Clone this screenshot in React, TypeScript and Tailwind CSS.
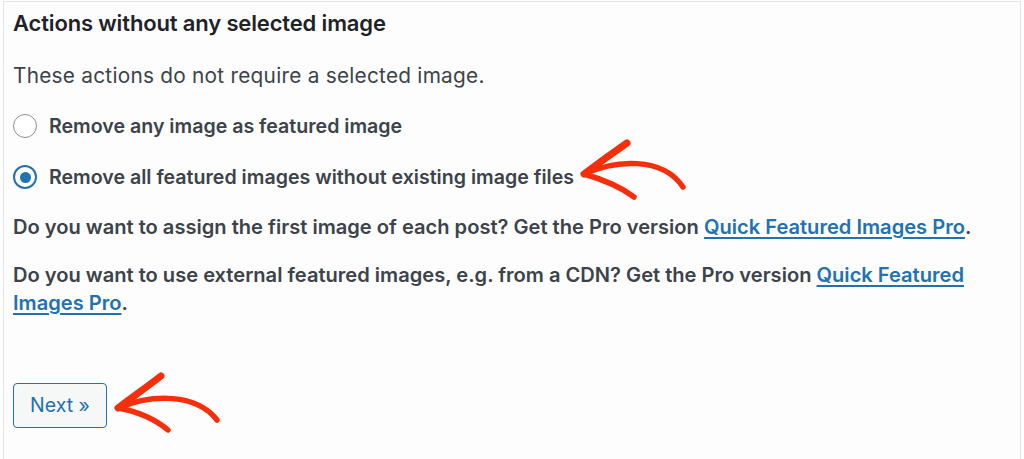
import React from "react";

const font = { fontFamily: "Inter, 'Noto Sans', 'Liberation Sans', sans-serif" };

function Radio({ checked }: { checked?: boolean }) {
  return checked ? (
    <span className="flex h-[24px] w-[24px] shrink-0 items-center justify-center rounded-full border-[2px] border-[#2271b1] bg-white">
      <span className="h-[11px] w-[11px] rounded-full bg-[#2271b1]" />
    </span>
  ) : (
    <span className="h-[24px] w-[24px] shrink-0 rounded-full border-[1.5px] border-[#8c8f94] bg-white" />
  );
}

export default function App() {
  return (
    <div className="relative h-[459px] w-full overflow-hidden bg-white" style={font}>
      <div className="ml-[3px] mt-[1px] h-[470px] w-[1018px] border border-[#e4e4e4] bg-[#fdfdfd] pl-[9px] pr-[10px]">
        <h2 className="mt-[7px] h-[28px] text-[22px] font-semibold leading-[28px] tracking-[-0.15px] text-[#1d2327]">
          Actions without any selected image
        </h2>
        <p className="mt-[25px] h-[28px] text-[20.8px] leading-[28px] tracking-[0.25px] text-[#3c434a]">
          These actions do not require a selected image.
        </p>
        <label className="mt-[22px] flex h-[28px] items-center gap-[12px] text-[19.6px] font-semibold leading-[28px] text-[#3c434a]">
          <Radio />
          <span>Remove any image as featured image</span>
        </label>
        <label className="mt-[23px] flex h-[28px] items-center gap-[12px] text-[19.6px] font-semibold leading-[28px] text-[#3c434a]">
          <Radio checked />
          <span>Remove all featured images without existing image files</span>
        </label>
        <p className="mt-[22px] text-[20.1px] font-semibold leading-[28px] text-[#3c434a]">
          Do you want to assign the first image of each post? Get the Pro version{" "}
          <a className="text-[#2271b1] underline underline-offset-[3px]" href="#">
            Quick Featured Images Pro
          </a>
          .
        </p>
        <p className="mt-[20px] text-[20.1px] font-semibold leading-[28px] text-[#3c434a]">
          Do you want to use external featured images, e.g. from a CDN? Get the Pro version{" "}
          <a className="text-[#2271b1] underline underline-offset-[3px]" href="#">
            Quick Featured
          </a>{" "}
          <a className="text-[#2271b1] underline underline-offset-[3px]" href="#">
            Images Pro
          </a>
          .
        </p>
        <button className="mt-[66px] flex h-[45px] w-[94px] items-center justify-center rounded-[4px] border border-[#2271b1] bg-[#f6f7f7] text-[19.5px] leading-none text-[#2271b1]">
          Next »
        </button>
      </div>
      <svg
        className="pointer-events-none absolute left-0 top-0"
        width="1024"
        height="459"
        viewBox="0 0 1024 459"
      >
        <g fill="none" stroke="#f52f0c" strokeLinecap="round" strokeLinejoin="round">
          <path d="M584 174 C615 160 662 156 683 187" strokeWidth="5.5" />
          <path d="M584 174 C600 162 614 152 627 143" strokeWidth="7" />
          <path d="M584 174 C605 180 622 188 634 197" strokeWidth="5.5" />
          <path d="M118 408 C152 394 196 393 217 420" strokeWidth="5.5" />
          <path d="M118 408 C134 396 148 386 161 376" strokeWidth="7" />
          <path d="M118 408 C140 412 156 420 168 430" strokeWidth="5.5" />
        </g>
      </svg>
    </div>
  );
}
